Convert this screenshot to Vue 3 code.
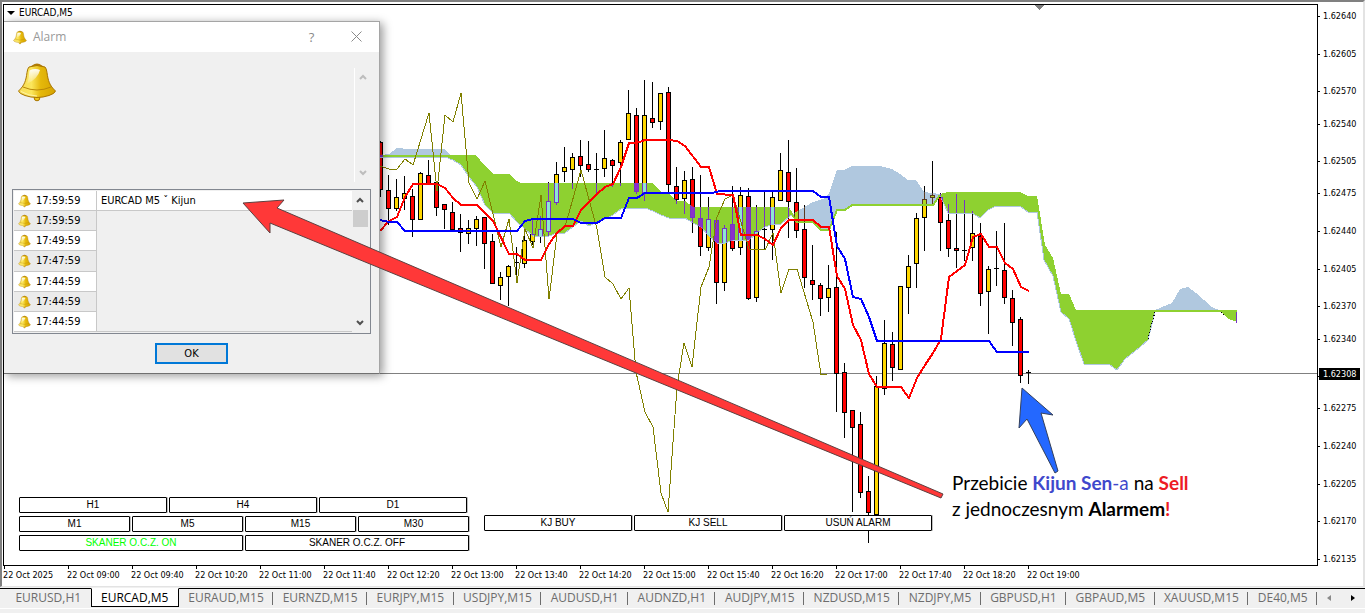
<template>
  <div class="terminal">
    <main class="chart-window">
      <section class="plot">
        <svg class="canvas" viewBox="4 5 1313 560" shape-rendering="crispEdges" aria-hidden="true">
          <defs>
            <clipPath id="down-cloud">
              <polygon v-for="(p, i) in downClouds" :key="i" :points="p" />
            </clipPath>
            <clipPath id="up-cloud">
              <polygon v-for="(p, i) in upClouds" :key="i" :points="p" />
            </clipPath>
          </defs>

          <line x1="4" x2="1317" y1="373.5" y2="373.5" stroke="#808080" />
          <polygon points="1035,5 1044,5 1039.5,10" fill="#808080" />

          <g v-for="c in candles" :key="c.x">
            <line :x1="c.x" :x2="c.x" :y1="c.high" :y2="c.low" stroke="#000" />
            <rect :x="c.x - 2" :y="c.top + 0.5" width="4" :height="c.height" :fill="c.fill" stroke="#000" />
          </g>

          <!-- облака Ишимоку -->
          <polygon v-for="(p, i) in upClouds" :key="'u' + i" :points="p" fill="#b0c8df" />
          <polygon v-for="(p, i) in downClouds" :key="'d' + i" :points="p" fill="#8ed130" />
          <polyline v-for="(p, i) in spanA" :key="'a' + i" :points="p" fill="none" stroke="#b0c8df" />
          <polyline v-for="(p, i) in spanB" :key="'b' + i" :points="p" fill="none" stroke="#8ed130" stroke-width="2" />

          <!-- свечи внутри облака -->
          <g clip-path="url(#down-cloud)">
            <g v-for="c in candles" :key="c.x">
              <line :x1="c.x" :x2="c.x" :y1="c.high" :y2="c.low" stroke="#7633c4" />
              <rect :x="c.x - 2" :y="c.top + 0.5" width="4" :height="c.height" :fill="c.inCloud" stroke="#7633c4" />
            </g>
          </g>
          <g clip-path="url(#up-cloud)">
            <g v-for="c in candles" :key="c.x">
              <line :x1="c.x" :x2="c.x" :y1="c.high" :y2="c.low" stroke="#5a3a20" />
              <rect :x="c.x - 2" :y="c.top + 0.5" width="4" :height="c.height" fill="#b0d820" stroke="#5a3a20" />
            </g>
          </g>
          <line x1="1236.5" x2="1236.5" y1="312" y2="323" stroke="#7633c4" />
          <polyline points="1148,339 1151,326 1155,312" fill="none" stroke="#000" stroke-dasharray="1 2" />
          <polyline points="1221,312 1224,315" fill="none" stroke="#000" stroke-dasharray="2 1" />

          <polyline :points="chikou" fill="none" stroke="#808000" />
          <polyline :points="tenkan" fill="none" stroke="#f00" stroke-width="2" />
          <polyline :points="kijun" fill="none" stroke="#00f" stroke-width="2" />
        </svg>

        <h1 class="symbol"><span class="triangle"></span>EURCAD,M5</h1>

        <div class="panel scanner">
          <div v-for="(row, i) in scannerRows" :key="i" class="panel-row">
            <button v-for="b in row" :key="b" type="button" :class="{ on: b === active }" @click="active = b">{{ b }}</button>
          </div>
        </div>
        <div class="panel orders">
          <div class="panel-row">
            <button v-for="b in orderButtons" :key="b" type="button">{{ b }}</button>
          </div>
        </div>

        <div v-if="alarmOpen" class="dialog" role="dialog" aria-labelledby="alarm-title">
          <header class="dialog-head">
            <svg class="bell-title" viewBox="0 0 40 40"><use href="#bell" /></svg>
            <h2 id="alarm-title">Alarm</h2>
            <button type="button" class="head-btn" aria-label="Pomoc">?</button>
            <button type="button" class="head-btn" aria-label="Zamknij" @click="alarmOpen = false">
              <svg width="11" height="11" viewBox="0 0 11 11"><path d="M0.5 0.5L10.5 10.5M10.5 0.5L0.5 10.5" stroke="#8a8a8a" /></svg>
            </button>
          </header>
          <div class="message">
            <svg class="bell-big" viewBox="0 0 40 40">
              <defs>
                <linearGradient id="gold" x1="0" x2="1" y1="0" y2="0">
                  <stop offset="0" stop-color="#f6dc5a" />
                  <stop offset="0.35" stop-color="#fbe65c" />
                  <stop offset="0.6" stop-color="#e5b80b" />
                  <stop offset="1" stop-color="#d6a400" />
                </linearGradient>
                <linearGradient id="shine" x1="0" x2="0" y1="0" y2="1">
                  <stop offset="0" stop-color="#fff" stop-opacity="0.95" />
                  <stop offset="1" stop-color="#fff" stop-opacity="0.1" />
                </linearGradient>
                <g id="bell">
                  <circle cx="20" cy="35.500" r="2.800" fill="#f0c818" stroke="#a87400" />
                  <path d="M15 3Q20 -1 25 3L28 5.500H12Z" fill="#b07a08" />
                  <path d="M12 4.500Q20 1.500 28 4.500Q29.500 6 30 10C31 18 32.500 23 38.500 28.500Q38 31 32 33Q20 37 8 33Q2 31 1.500 28.500C7.500 23 9 18 10 10Q10.500 6 12 4.500Z" fill="url(#gold)" stroke="#a87400" />
                  <path d="M6 24.500Q20 30.500 34 24.500" fill="none" stroke="#b98708" />
                  <path d="M4 29Q12 33.500 20 33.500" fill="none" stroke="#fff3a0" />
                  <path d="M12.500 8Q18 5.500 23 7.500Q21 16 10 21.500Q12 16 12.500 8Z" fill="url(#shine)" />
                </g>
              </defs>
              <use href="#bell" />
            </svg>
            <div class="scroll idle">
              <svg class="chevron" viewBox="0 0 8 6"><path d="M1 5L4 2L7 5" /></svg>
              <svg class="chevron" viewBox="0 0 8 6"><path d="M1 1L4 4L7 1" /></svg>
            </div>
          </div>
          <div class="log">
            <table>
              <tbody>
                <tr v-for="(a, i) in alarms" :key="i">
                  <td class="time"><svg class="bell-row" viewBox="0 0 40 40"><use href="#bell" /></svg>{{ a.time }}</td>
                  <td class="text">{{ a.text }}</td>
                </tr>
              </tbody>
            </table>
            <div class="scroll">
              <svg class="chevron" viewBox="0 0 8 6"><path d="M1 5L4 2L7 5" /></svg>
              <span class="thumb"></span>
              <svg class="chevron" viewBox="0 0 8 6"><path d="M1 1L4 4L7 1" /></svg>
            </div>
          </div>
          <button type="button" class="ok" @click="alarmOpen = false">OK</button>
        </div>

        <svg class="canvas notes" viewBox="4 5 1313 560">
          <polygon points="243,203 284,200 277,208 943,494 941,498 270,223 270,233" fill="#ff3838" stroke="#5c4040" />
          <polygon points="1022,388 1053,415 1041,413 1058,471 1055,473 1027,419 1019,428" fill="#2468ff" stroke="#33405c" />
          <text x="952" y="490">Przebicie <tspan class="b blue">Kijun Sen</tspan><tspan class="blue">-a</tspan> na <tspan class="b red">Sell</tspan></text>
          <text x="952" y="516">z jednoczesnym <tspan class="b">Alarmem</tspan><tspan class="b red">!</tspan></text>
        </svg>
      </section>

      <aside class="prices">
        <ul>
          <li v-for="p in priceScale" :key="p.label" :style="{ flexGrow: p.gap }">{{ p.label }}</li>
        </ul>
        <strong class="current">1.62308</strong>
      </aside>

      <ul class="times">
        <li v-for="t in times" :key="t">22 Oct {{ t }}</li>
      </ul>
    </main>

    <nav class="tabs">
      <a v-for="t in tabs" :key="t" href="#" :class="{ current: t === tab }" @click.prevent="tab = t">{{ t }}</a>
      <button type="button" class="arrow left" aria-label="Wstecz"></button>
      <button type="button" class="arrow right" aria-label="Dalej"></button>
    </nav>
    <footer class="status"></footer>
  </div>
</template>

<script setup>
import { computed, ref } from 'vue';

const alarmOpen = ref(true);
const active = ref('SKANER O.C.Z. ON');
const tab = ref('EURCAD,M5');

const scannerRows = [
  ['H1', 'H4', 'D1'],
  ['M1', 'M5', 'M15', 'M30'],
  ['SKANER O.C.Z. ON', 'SKANER O.C.Z. OFF']
];
const orderButtons = ['KJ BUY', 'KJ SELL', 'USUŃ ALARM'];

const alarms = [
  { time: '17:59:59', text: 'EURCAD M5 ˇ Kijun' },
  { time: '17:59:59', text: '' },
  { time: '17:49:59', text: '' },
  { time: '17:47:59', text: '' },
  { time: '17:44:59', text: '' },
  { time: '17:44:59', text: '' },
  { time: '17:44:59', text: '' }
];

const tabs = [
  'EURUSD,H1', 'EURCAD,M5', 'EURAUD,M15', 'EURNZD,M15', 'EURJPY,M15', 'USDJPY,M15', 'AUDUSD,H1', 'AUDNZD,H1',
  'AUDJPY,M15', 'NZDUSD,M15', 'NZDJPY,M5', 'GBPUSD,H1', 'GBPAUD,M5', 'XAUUSD,M15', 'DE40,M5'
];

const times = [
  '2025', '09:00', '09:40', '10:20', '11:00', '11:40', '12:20', '13:00', '13:40',
  '14:20', '15:00', '15:40', '16:20', '17:00', '17:40', '18:20', '19:00'
];

// Шкала цен, расстояние до следующей метки пропорционально цене
const points = [640, 605, 570, 540, 505, 475, 440, 405, 370, 340, 305, 275, 240, 205, 170, 135];
const priceScale = computed(() => points.map((p, i) => ({
  label: '1.62' + p,
  gap: i < points.length - 1 ? p - points[i + 1] : 0
})));

// Свечи: high, верх тела, низ тела, low, цвет (r - вниз, y - вверх)
const raw = [
  [141, 142, 190, 197, 'r'], [175, 190, 209, 225, 'r'], [179, 197, 209, 211, 'y'], [176, 193, 199, 210, 'y'],
  [189, 196, 220, 237, 'r'], [172, 173, 220, 220, 'y'], [160, 175, 184, 184, 'r'], [181, 182, 208, 216, 'r'],
  [204, 204, 210, 229, 'r'], [202, 212, 230, 231, 'r'], [214, 228, 233, 252, 'r'], [220, 228, 234, 244, 'y'],
  [216, 219, 229, 246, 'y'], [217, 217, 244, 269, 'r'], [234, 241, 284, 284, 'r'], [272, 277, 286, 300, 'y'],
  [265, 266, 277, 306, 'y'], [247, 262, 263, 279, 'r'], [228, 240, 264, 268, 'y'], [219, 234, 242, 245, 'y'],
  [216, 229, 237, 243, 'y'], [182, 201, 232, 236, 'y'], [162, 174, 203, 205, 'y'], [147, 167, 172, 182, 'y'],
  [153, 157, 170, 189, 'y'], [140, 156, 166, 177, 'r'], [141, 164, 170, 172, 'r'], [153, 169, 170, 193, 'r'],
  [130, 158, 169, 177, 'y'], [159, 160, 166, 187, 'r'], [140, 142, 163, 186, 'y'], [90, 113, 140, 140, 'y'],
  [108, 115, 192, 194, 'r'], [80, 115, 193, 201, 'y'], [82, 118, 123, 128, 'r'], [93, 93, 122, 130, 'y'],
  [87, 92, 185, 192, 'r'], [167, 186, 200, 204, 'r'], [171, 180, 199, 214, 'y'], [167, 179, 218, 233, 'r'],
  [175, 218, 247, 256, 'r'], [197, 219, 248, 251, 'y'], [219, 220, 283, 304, 'r'], [225, 228, 283, 291, 'y'],
  [186, 224, 249, 251, 'r'], [187, 195, 248, 255, 'y'], [188, 196, 299, 300, 'r'], [205, 231, 298, 302, 'y'],
  [192, 229, 230, 250, 'r'], [192, 197, 230, 260, 'y'], [153, 170, 201, 201, 'y'], [140, 172, 202, 238, 'r'],
  [168, 202, 231, 238, 'r'], [205, 229, 278, 288, 'r'], [245, 280, 285, 300, 'r'], [283, 285, 299, 316, 'r'],
  [265, 288, 298, 312, 'y'], [232, 287, 374, 412, 'r'], [363, 372, 413, 438, 'r'], [410, 410, 428, 512, 'r'],
  [412, 424, 493, 498, 'r'], [476, 491, 513, 543, 'r'], [376, 386, 515, 515, 'y'], [320, 343, 389, 395, 'y'],
  [332, 344, 368, 381, 'r'], [286, 286, 370, 370, 'y'], [255, 266, 288, 314, 'y'], [213, 218, 264, 288, 'y'],
  [186, 199, 218, 251, 'y'], [161, 195, 198, 204, 'y'], [193, 197, 223, 251, 'r'], [204, 220, 249, 257, 'r'],
  [194, 248, 251, 268, 'r'], [200, 250, 251, 261, 'r'], [211, 233, 248, 261, 'y'], [223, 236, 294, 306, 'r'],
  [266, 269, 292, 334, 'y'], [231, 268, 269, 286, 'r'], [223, 270, 298, 304, 'r'], [290, 298, 323, 346, 'r'],
  [317, 319, 376, 383, 'r'], [370, 372, 373, 384, 'r']
];

const candles = raw.map(([high, top, bottom, low, color], i) => ({
  x: 380.5 + 8 * i,
  high,
  low,
  top,
  height: Math.max(bottom - top - 1, 0.01),
  fill: color === 'y' ? '#ffd700' : '#ff0000',
  inCloud: color === 'y' ? '#8fe6d2' : '#8b2fc9'
}));

const downTop = '380,155 476,155 485,166 493,174 509,174 517,181 521,183 652,183 661,192 669,194 677,201 685,201 693,207 789,207 793,214';
const downBottom = '793,214 789,217 781,224 773,224 765,227 757,233 749,240 733,240 725,243 717,243 709,236 701,227 693,223 685,218 669,218 661,215 653,211 645,208 629,208 621,209 613,215 605,219 597,222 589,226 581,221 573,227 565,233 557,233 549,236 533,236 525,229 517,222 509,213 493,213 485,205 477,187 469,177 461,165 453,160 445,157 380,157';
const secondTop = '933,204 940,194 948,192 1020,192 1028,196 1037,196 1045,245 1053,258 1061,294 1069,294 1076,310 1155,310 1155,312';
const secondBottom = '1155,312 1148,340 1140,347 1125,359 1117,370 1109,364 1084,364 1077,344 1069,319 1061,312 1053,276 1044,260 1037,212 1028,212 1020,206 996,206 988,210 980,218 972,213 948,213 940,195';

const downClouds = [
  downTop + ' ' + downBottom,
  secondTop + ' ' + secondBottom,
  '1220,311 1237,311 1237,322 1229,319'
];
const upClouds = [
  '380,155 389,154 397,148 408,149 445,149 450,155',
  '793,214 813,202 823,199 829,194 837,170 844,170 852,166 880,166 892,169 900,174 908,180 916,180 924,192 940,194 933,204 852,204 844,210 837,210 829,230 821,230 813,222 797,222',
  '1155,310 1172,303 1180,289 1188,287 1196,293 1212,307 1221,311'
];
const spanA = [downBottom, secondBottom];
const spanB = [
  '380,156 450,156',
  '792,214 797,222 813,222 821,230 829,230 837,210 845,210 852,205 933,205 940,195',
  '1155,311 1237,311'
];

const tenkan = '380,231 389,221 397,217 405,197 413,184 437,184 445,188 453,198 461,205 477,205 493,221 509,254 517,254 525,260 541,260 549,244 557,233 565,226 573,226 581,210 597,194 605,187 613,184 621,167 629,143 637,143 645,140 669,140 677,141 685,146 701,167 709,167 717,194 733,195 741,235 757,235 765,239 773,245 781,228 789,220 813,220 821,227 829,227 837,276 845,289 853,325 861,340 869,374 877,387 901,387 909,398 917,378 925,365 933,353 941,339 949,277 965,265 973,237 981,234 989,247 997,247 1005,263 1013,269 1021,287 1029,291';
const kijun = '380,220 389,222 397,222 405,231 517,231 525,221 533,219 573,219 581,223 597,223 605,218 621,218 629,198 637,198 645,193 712,193 720,191 813,191 821,197 829,197 837,246 845,259 853,297 861,299 869,317 877,341 989,341 997,352 1029,352';
const chikou = '380,166 389,169 397,169 405,159 413,165 429,113 437,191 445,115 453,122 461,93 469,183 477,199 485,181 501,247 509,219 517,283 525,229 533,248 541,195 549,299 557,234 565,227 581,170 597,229 605,277 613,284 621,299 629,288 636,372 645,412 653,427 661,493 668,512 677,387 684,343 692,367 701,287 709,267 717,217 725,199 733,195 749,249 765,250 773,233 781,293 789,269 797,269 813,322 821,375 827,374';
</script>

<style>
body {
  background: #f0f0f0;
}
</style>

<style scoped>
* {
  box-sizing: border-box;
}

.terminal {
  font-family: "DejaVu Sans Condensed", "DejaVu Sans", sans-serif;
  font-size: 11px;
  color: #000;
}

ul,
h1,
h2 {
  margin: 0;
  padding: 0;
  list-style: none;
  font-weight: normal;
}

button {
  font-family: inherit;
  color: inherit;
  padding: 0;
}

.chart-window {
  display: grid;
  grid-template-columns: 1fr 44px;
  background: #fff;
  border-top: 2px solid #808080;
  border-left: 2px solid #808080;
  border-right: 2px solid #e3e3e3;
  border-bottom: 1px solid #e3e3e3;
  padding: 2px 1px 0;
}

.plot {
  position: relative;
  border: 1px solid #000;
}

.canvas {
  display: block;
  width: 100%;
}

.notes {
  position: absolute;
  top: 0;
  left: 0;
  pointer-events: none;
}

.notes text {
  font-family: Lato, sans-serif;
  font-size: 19px;
}

.b {
  font-weight: bold;
}

.blue {
  fill: #3f48cc;
}

.red {
  fill: #ed1c24;
}

.symbol {
  position: absolute;
  top: 2px;
  left: 3px;
  display: flex;
  align-items: center;
  gap: 4px;
  font-size: 10px;
  line-height: 12px;
}

.triangle {
  border: 4px solid transparent;
  border-top-color: #000;
  border-bottom: 0;
}

.panel {
  position: absolute;
  display: flex;
  flex-direction: column;
  gap: 3px;
}

.scanner {
  left: 15px;
  bottom: 14px;
  width: 450px;
}

.scanner .panel-row:first-child {
  padding-right: 2px;
}

.orders {
  left: 480px;
  bottom: 34px;
  width: 448px;
}

.panel-row {
  display: flex;
  gap: 2px;
}

.panel button {
  flex: 1;
  height: 16px;
  background: #fff;
  border: 1px solid #000;
  border-radius: 1px;
  box-shadow: 1px 0 #c0c0c0;
  font: 10px/14px "Liberation Sans", Arial, sans-serif;
}

.panel .on {
  color: #0f0;
}

.dialog {
  position: absolute;
  top: 16px;
  left: 0;
  width: 376px;
  background: #f0f0f0;
  border: 1px solid #a5a5a5;
  border-left: 0;
  border-bottom-color: #707070;
  box-shadow: 3px 2px 9px rgba(0, 0, 0, 0.4);
  display: flex;
  flex-direction: column;
}

.dialog-head {
  display: flex;
  align-items: center;
  height: 30px;
  padding: 0 0 0 9px;
  background: #fff;
  color: #999;
}

.dialog-head h2 {
  flex: 1;
  padding-left: 6px;
  font: 12px/16px "Open Sans", sans-serif;
}

.head-btn {
  width: 45px;
  height: 30px;
  border: 0;
  background: none;
  color: #8a8a8a;
  font: 13px/16px "Open Sans", sans-serif;
}

.bell-title {
  width: 14px;
  height: 15px;
}

.bell-big {
  width: 40px;
  height: 41px;
}

.bell-row {
  width: 13px;
  height: 14px;
  margin-right: 5px;
  vertical-align: middle;
}

.message {
  display: flex;
  justify-content: space-between;
  height: 137px;
  padding: 10px 9px 0 13px;
}

.scroll {
  display: flex;
  flex-direction: column;
  align-items: center;
  width: 16px;
  padding: 6px 0;
  background: #f0f0f0;
}

.idle {
  justify-content: space-between;
  height: 114px;
  margin-top: 6px;
  border-left: 1px solid #fff;
}

.chevron {
  width: 8px;
  height: 6px;
  fill: none;
  stroke: #505050;
  stroke-width: 2;
}

.idle .chevron {
  stroke: #bdbdbd;
}

.thumb {
  width: 15px;
  height: 17px;
  margin: 7px 0 auto;
  background: #cdcdcd;
}

.log {
  display: flex;
  height: 145px;
  margin: 0 8px;
  padding: 1px 2px 1px 1px;
  border: 1px solid #828790;
}

.log table {
  flex: 1;
  border-collapse: separate;
  border-spacing: 0;
  table-layout: fixed;
}

.log td {
  height: 20px;
  padding: 1px 4px 0;
  line-height: 18px;
  white-space: nowrap;
}

.log .time {
  width: 83px;
  background: #fff;
  border-right: 1px solid #c8c8c8;
  border-bottom: 1px solid #c8c8c8;
}

.log tr:nth-child(even) .time {
  background: #ebebeb;
}

.log tr:first-child .text {
  background: #fff;
  border-bottom: 1px solid #c8c8c8;
}

.log tr:last-child .text {
  border-bottom: 1px solid #c8c8c8;
}

.ok {
  align-self: center;
  width: 73px;
  height: 21px;
  margin: 9px 0;
  background: #e1e1e1;
  border: 2px solid #0078d7;
  font-size: 11px;
}

.prices {
  position: relative;
  display: flex;
  font-size: 9px;
  line-height: 12px;
}

.prices ul {
  flex: 1;
  display: flex;
  flex-direction: column;
  padding: 6px 0 1px;
}

.prices li {
  flex: 0 0 0px;
  display: flex;
  gap: 3px;
}

.prices li:last-child {
  flex-basis: 12px;
}

.prices li::before {
  content: "";
  width: 2px;
  height: 1px;
  margin-top: 6px;
  background: #000;
}

.prices .current {
  position: absolute;
  top: 65%;
  left: 1px;
  width: 41px;
  margin-top: -1px;
  padding-left: 4px;
  background: #000;
  color: #fff;
  font-weight: normal;
}

.times {
  display: grid;
  grid-template-columns: repeat(20, 64fr) 35fr;
  height: 20px;
  font-size: 9px;
  line-height: 12px;
}

.times li {
  min-width: 0;
  white-space: nowrap;
}

.times li::before {
  content: "";
  display: block;
  width: 1px;
  height: 3px;
  margin-left: 1px;
  background: #000;
}

.tabs {
  display: flex;
  height: 21px;
  margin-top: 1px;
  border-bottom: 1px solid #fff;
}

.tabs a {
  position: relative;
  flex: 1 1 auto;
  height: 19px;
  border-top: 1px solid #000;
  color: #6d6d6d;
  font: 12px/18px "Open Sans", sans-serif;
  text-align: center;
  text-decoration: none;
}

.tabs a:first-child {
  padding-left: 6px;
}

.tabs a:not(.current)::after {
  content: "";
  position: absolute;
  top: 3px;
  right: 0;
  width: 1px;
  height: 13px;
  background: #6d6d6d;
}

.tabs a:first-child::after {
  display: none;
}

.tabs .current {
  background: #fff;
  border: 1px solid #000;
  border-top-color: #fff;
  color: #000;
}

.arrow {
  width: 24px;
  height: 19px;
  border: 0;
  border-top: 1px solid #000;
  background: none;
  display: flex;
  align-items: center;
  justify-content: center;
}

.arrow::before {
  content: "";
  border: 3px solid transparent;
}

.arrow.left::before {
  border-right: 4px solid #8a8a8a;
  border-left: 0;
}

.arrow.right::before {
  border-left: 4px solid #000;
  border-right: 0;
}

.status {
  height: 4px;
  background: #f0f0f0;
}
</style>
